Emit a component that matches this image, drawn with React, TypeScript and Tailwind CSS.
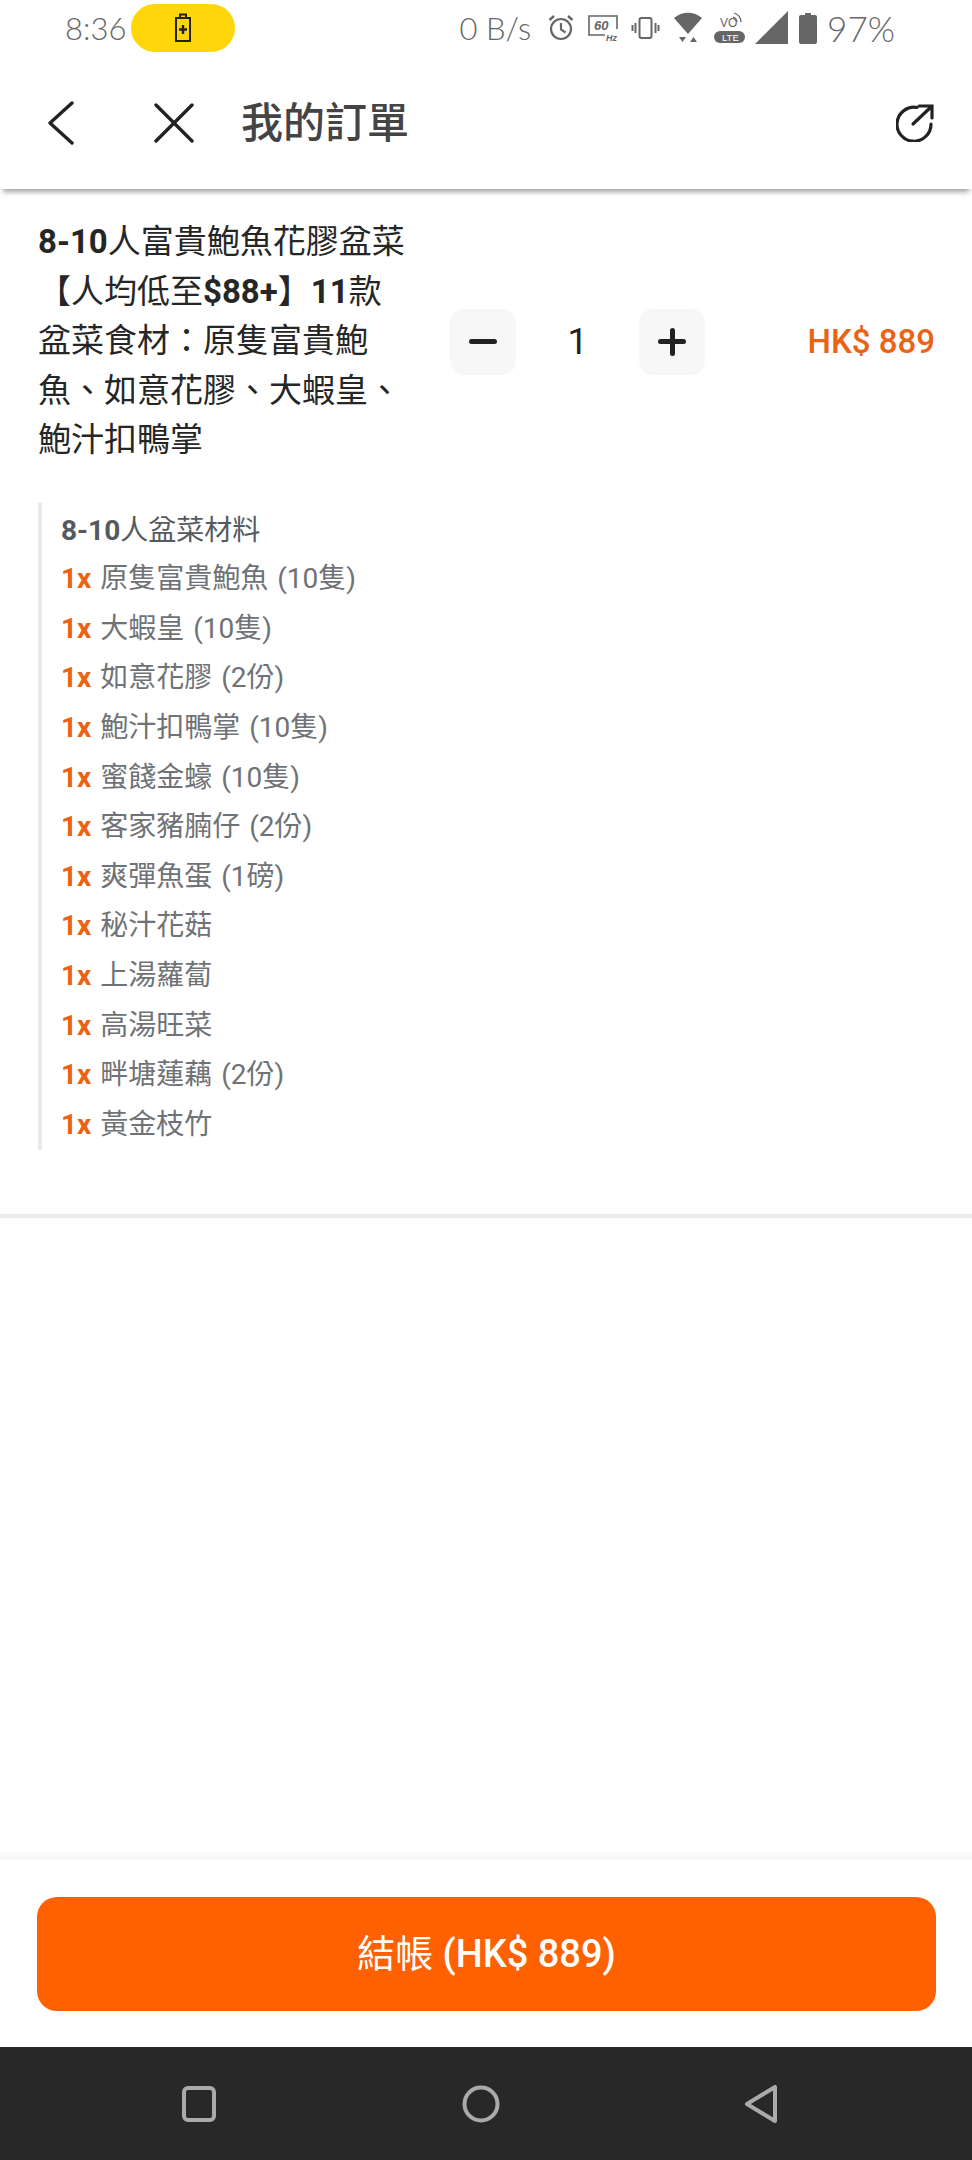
import React from "react";

const items = [
  "原隻富貴鮑魚 (10隻)",
  "大蝦皇 (10隻)",
  "如意花膠 (2份)",
  "鮑汁扣鴨掌 (10隻)",
  "蜜餞金蠔 (10隻)",
  "客家豬腩仔 (2份)",
  "爽彈魚蛋 (1磅)",
  "秘汁花菇",
  "上湯蘿蔔",
  "高湯旺菜",
  "畔塘蓮藕 (2份)",
  "黃金枝竹",
];

function StatusIcons() {
  return (
    <div className="flex items-center text-[#666666]">
      <span className="text-[31px] leading-none font-['Lato','Noto_Sans',sans-serif] font-light mr-[17px]">0 B/s</span>
      <svg width="26" height="28" viewBox="0 0 26 28" className="mr-[14px]" fill="none" stroke="#666" strokeWidth="2.2">
        <circle cx="13" cy="15" r="10" />
        <path d="M13 9v6.5l4.5 3" />
        <path d="M1.5 6 6 2M24.5 6 20 2" strokeWidth="2.4" />
      </svg>
      <svg width="30" height="28" viewBox="0 0 30 28" className="mr-[13px]" fill="none" stroke="#666" strokeWidth="1.6">
        <path d="M29 15V2H1v19h16" />
        <text x="6" y="16" fontSize="13" fontStyle="italic" fontWeight="700" fill="#666" stroke="none" fontFamily="'Liberation Sans',sans-serif">60</text>
        <text x="18" y="27" fontSize="9" fontStyle="italic" fontWeight="700" fill="#666" stroke="none" fontFamily="'Liberation Sans',sans-serif">Hz</text>
      </svg>
      <svg width="29" height="24" viewBox="0 0 28 24" className="mr-[14px]" fill="none" stroke="#666" strokeWidth="2">
        <rect x="8" y="2" width="12" height="20" rx="2" />
        <path d="M4 7v10M1 9v6M24 7v10M27 9v6" />
      </svg>
      <svg width="28" height="32" viewBox="0 0 28 32" className="mr-[12px]" fill="#666">
        <path d="M0 6C8-1 20-1 28 6L14 22Z" />
        <path d="M5 25h7l-3.500 5ZM16 30l3.500-5 3.500 5Z" />
      </svg>
      <svg width="32" height="32" viewBox="0 0 32 32" className="mr-[9px]" fill="none">
        <text x="6" y="15" fontSize="12" fill="#666" fontFamily="'Liberation Sans',sans-serif">VO</text>
        <path d="M19 5a6 6 0 0 1 4 5M20 1a10 10 0 0 1 7 9" stroke="#666" strokeWidth="1.300" />
        <rect x="0" y="19" width="31" height="12" rx="6" fill="#666" />
        <text x="8" y="29" fontSize="9.500" fill="#fff" fontFamily="'Liberation Sans',sans-serif">LTE</text>
      </svg>
      <svg width="34" height="34" viewBox="0 0 34 34" className="mr-[10px]" fill="#666"><path d="M33 0v33H0Z" /></svg>
      <svg width="18" height="31" viewBox="0 0 18 31" className="mr-[10px]" fill="#666"><path d="M6 0h6v2h4a2 2 0 0 1 2 2v25a2 2 0 0 1-2 2H2a2 2 0 0 1-2-2V4a2 2 0 0 1 2-2h4Z" /></svg>
      <span className="text-[35px] leading-none font-['Lato','Noto_Sans',sans-serif] font-light">97%</span>
    </div>
  );
}

export default function App() {
  const sans = "font-['Roboto','Noto_Sans_CJK_TC',sans-serif]";
  return (
    <div className={`relative w-[972px] h-[2160px] bg-white flex flex-col overflow-hidden ${sans}`}>
      <div className="h-[59px] flex items-center justify-between pl-[65px] pr-[77px] pb-[3px] shrink-0">
        <div className="flex items-center">
          <span className="text-[31px] leading-none text-[#666666] font-['Lato','Noto_Sans',sans-serif] font-light">8:36</span>
          <div className="w-[104px] h-[48px] rounded-full bg-[#ffd60a] ml-[5px] flex items-center justify-center">
            <svg width="18" height="30" viewBox="0 0 18 30" fill="none" stroke="#222" strokeWidth="2">
              <path d="M2 5h14v23H2zM6 5V1.500h6V5" />
              <path d="M9 12v9M5 16.500h8" strokeWidth="2.400" />
            </svg>
          </div>
        </div>
        <StatusIcons />
      </div>

      <header className="h-[130px] shrink-0 flex items-center justify-between pl-[47px] pr-[38px] pb-[2px] shadow-[0_6px_5px_-3px_rgba(70,70,70,0.5)] relative">
        <div className="flex items-center">
          <svg width="28" height="44" viewBox="0 0 28 44" fill="none" stroke="#222" strokeWidth="3.400" strokeLinecap="round" strokeLinejoin="round">
            <path d="M25 2 3 22l22 20" />
          </svg>
          <svg width="40" height="40" viewBox="0 0 40 40" className="ml-[79px]" fill="none" stroke="#222" strokeWidth="3.400" strokeLinecap="round">
            <path d="m2 2 36 36M38 2 2 38" />
          </svg>
          <h1 className="ml-[47px] mt-[2px] text-[42px] leading-none font-medium text-[#444444]">我的訂單</h1>
        </div>
        <svg width="38" height="38" viewBox="0 0 38 38" fill="none" stroke="#222" strokeWidth="3.200" strokeLinecap="round">
          <path d="M21 3.500A17 17 0 1 0 35 20" />
          <path d="M17 20 35 3M23 2h13v12" />
        </svg>
      </header>

      <main className="flex-1">
        <section className="pl-[38px] pr-[37px] pt-[28px] h-[1029px] box-border flex flex-col">
          <div className="flex items-center">
            <p className="w-[374px] pb-[2px] text-[33px] leading-[49.500px] text-[#262626]">
              <b className="font-bold">8-10</b>人富貴鮑魚花膠盆菜【人均低至<b className="font-bold">$88+</b>】<b className="font-bold">11</b>款盆菜食材：原隻富貴鮑魚、如意花膠、大蝦皇、鮑汁扣鴨掌
            </p>
            <div className="ml-[38px] flex items-center">
              <button className="w-[66px] h-[66px] rounded-[14px] bg-[#f7f7f7] flex items-center justify-center">
                <span className="block w-[28px] h-[5px] rounded-full bg-[#222222]" />
              </button>
              <span className="w-[123px] text-center text-[36px] leading-none text-[#222222]">1</span>
              <button className="relative w-[66px] h-[66px] rounded-[14px] bg-[#f7f7f7] flex items-center justify-center">
                <span className="block w-[28px] h-[5px] rounded-full bg-[#222222]" />
                <span className="absolute w-[5px] h-[28px] rounded-full bg-[#222222]" />
              </button>
            </div>
            <span className="ml-auto text-[33px] leading-none font-medium text-[#eb6213]">HK$ 889</span>
          </div>
          <div className="mt-[36px] border-l-4 border-[#e8e9eb] pl-[19px] pt-[4px] w-fit">
            <div className="h-[48px] flex items-center text-[28px] text-[#555a60] leading-none"><b className="font-bold">8-10</b>人盆菜材料</div>
            {items.map((t) => (
              <div key={t} className="h-[49.600px] flex items-center text-[28px] leading-none text-[#6f7276] [word-spacing:2px]">
                <b className="font-bold text-[#eb6213] mr-[9px]">1x</b>
                <span>{t}</span>
              </div>
            ))}
          </div>
          <div className="mt-auto -mx-[38px] h-[4px] bg-[#ececec]" />
        </section>
      </main>

      <footer className="shrink-0">
        <div className="h-[10px] bg-gradient-to-b from-white to-[#f5f5f5]" />
        <div className="h-[187px] pl-[37px] pr-[36px] pt-[37px]">
          <button className="w-full h-[114px] rounded-[20px] bg-[#ff6000] text-white text-[38px] leading-none">
            結帳 <span className="font-medium">(HK$ 889)</span>
          </button>
        </div>
        <nav className="h-[113px] bg-[#282828] flex items-center justify-between pl-[182px] pr-[195px]">
          <svg width="34" height="36" viewBox="0 0 34 36" fill="none" stroke="#aaaaaa" strokeWidth="4"><rect x="2" y="2" width="30" height="32" rx="4" /></svg>
          <svg width="38" height="38" viewBox="0 0 38 38" fill="none" stroke="#aaaaaa" strokeWidth="4"><circle cx="19" cy="19" r="16.500" /></svg>
          <svg width="32" height="38" viewBox="0 0 32 38" fill="none" stroke="#aaaaaa" strokeWidth="4" strokeLinejoin="round"><path d="M30 2v34L2 19Z" /></svg>
        </nav>
      </footer>
    </div>
  );
}
